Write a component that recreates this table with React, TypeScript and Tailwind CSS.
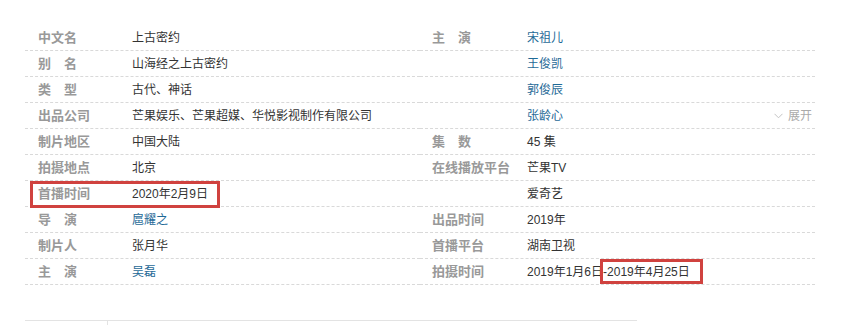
import React from 'react';

type Item = { label: string; value: React.ReactNode; link?: boolean; more?: boolean; mark?: boolean };

const left: Item[] = [
  { label: '中文名', value: '上古密约' },
  { label: '别　名', value: '山海经之上古密约' },
  { label: '类　型', value: '古代、神话' },
  { label: '出品公司', value: '芒果娱乐、芒果超媒、华悦影视制作有限公司' },
  { label: '制片地区', value: '中国大陆' },
  { label: '拍摄地点', value: '北京' },
  { label: '首播时间', value: '2020年2月9日', mark: true },
  { label: '导　演', value: '扈耀之', link: true },
  { label: '制片人', value: '张月华' },
  { label: '主　演', value: '吴磊', link: true },
];

const right: Item[] = [
  { label: '主　演', value: '宋祖儿', link: true },
  { label: '', value: '王俊凯', link: true },
  { label: '', value: '郭俊辰', link: true },
  { label: '', value: '张龄心', link: true, more: true },
  { label: '集　数', value: '45 集' },
  { label: '在线播放平台', value: '芒果TV' },
  { label: '', value: '爱奇艺' },
  { label: '出品时间', value: '2019年' },
  { label: '首播平台', value: '湖南卫视' },
  {
    label: '拍摄时间',
    value: (
      <>
        2019年1月6日
        <span className="relative">
          -2019年4月25日
          <span className="absolute -left-[3px] -right-[13px] -top-[6px] -bottom-[5px] border-[3px] border-[#d0423f]" />
        </span>
      </>
    ),
  },
];

const Row = ({ item, pad, labelW }: { item: Item; pad: string; labelW: string }) => (
  <div className={`relative flex h-[26px] items-center border-b border-dashed border-[#d9d9d9] ${pad}`}>
    <div className={`${labelW} shrink-0 whitespace-nowrap text-[13px] font-bold text-[#999]`}>{item.label}</div>
    <div className={`flex-1 whitespace-nowrap text-[12px] ${item.link ? 'text-[#1f6a97]' : 'text-[#333]'}`}>{item.value}</div>
    {item.more && (
      <div className="flex items-center gap-[5px] pr-[3px] text-[12px] text-[#aaa]">
        <svg width="9" height="6" viewBox="0 0 9 6" fill="none" stroke="#c4c4c4" strokeWidth="1">
          <path d="M0.5 0.8 L4.5 4.8 L8.5 0.8" />
        </svg>
        展开
      </div>
    )}
    {item.mark && <div className="absolute left-[5px] top-0 h-[27px] w-[190px] border-[3px] border-[#d0423f]" />}
  </div>
);

export default function App() {
  return (
    <div
      className="min-h-[325px] bg-white pl-[25px] pt-[25px]"
      style={{ fontFamily: '"Liberation Sans", "Noto Sans CJK SC", sans-serif' }}
    >
      <div className="flex w-[790px]">
        <div className="w-[395px]">
          {left.map((it, i) => (
            <Row key={i} item={it} pad="pl-[13px]" labelW="w-[94px]" />
          ))}
        </div>
        <div className="w-[395px]">
          {right.map((it, i) => (
            <Row key={i} item={it} pad="pl-[12px]" labelW="w-[95px]" />
          ))}
        </div>
      </div>
      <div className="mt-[35px] flex h-[5px] w-[612px] border-t border-[#e3e3e3]">
        <div className="w-[83px] border-r border-[#e3e3e3]" />
      </div>
    </div>
  );
}
